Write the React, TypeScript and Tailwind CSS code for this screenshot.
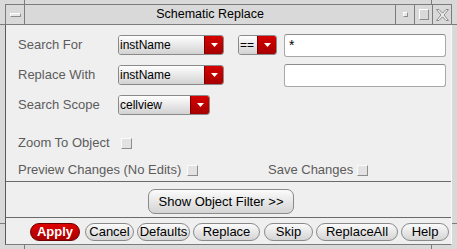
import type { ReactNode } from 'react';

const font = "font-['Liberation_Sans',Arial,sans-serif]";

function Arrow() {
  return (
    <svg width="7" height="4" viewBox="0 0 7 4" aria-hidden>
      <polygon points="0,0 7,0 3.5,4" fill="#ffffff" />
    </svg>
  );
}

function Dropdown({ value, className }: { value: string; className: string }) {
  return (
    <div className={`flex h-[20px] overflow-hidden rounded-[3px] border border-[#8a8a8a] ${className}`}>
      <div className="flex flex-1 items-center bg-linear-to-b from-white to-[#d2d2d2] pl-[1px] text-[12px] text-black">
        {value}
      </div>
      <div className="flex w-[19px] items-center justify-center border-l border-[#7a0000] bg-linear-to-b from-[#d60000] to-[#a60000]">
        <Arrow />
      </div>
    </div>
  );
}

function TextField({ value }: { value?: string }) {
  return (
    <div className="h-[23px] w-[162px] rounded-[3px] border border-[#a8a8a8] border-t-[#8c8c8c] bg-white pl-[4px] text-[14px] leading-[20px] text-black">
      {value}
    </div>
  );
}

function Checkbox() {
  return (
    <div className="h-[11px] w-[11px] border border-[#fbfbfb] border-r-[#8c8c8c] border-b-[#8c8c8c] bg-[#e2e2e2]" />
  );
}

function Row({ label, children }: { label: string; children: ReactNode }) {
  return (
    <div className="flex h-[30px] items-center">
      <div className="w-[100px] text-[13px] text-[#5c5c5c]">{label}</div>
      {children}
    </div>
  );
}

const buttons = [
  { label: 'Apply', cls: 'ml-[24px] w-[50px]', primary: true },
  { label: 'Cancel', cls: 'ml-[5px] w-[49px]' },
  { label: 'Defaults', cls: 'ml-[3px] w-[53px]' },
  { label: 'Replace', cls: 'ml-[3px] w-[67px]' },
  { label: 'Skip', cls: 'ml-[4px] w-[49px]' },
  { label: 'ReplaceAll', cls: 'ml-[3px] w-[82px]' },
  { label: 'Help', cls: 'ml-[3px] w-[48px]' },
];

export default function App() {
  return (
    <div className={`relative h-[249px] w-[457px] overflow-hidden bg-[#d9d9d9] ${font}`}>
      {/* frame corner ticks */}
      <div className="absolute left-[24px] top-0 h-[4px] w-px bg-[#7c7c7c]" />
      <div className="absolute left-[431px] top-0 h-[4px] w-px bg-[#7c7c7c]" />
      <div className="absolute left-0 top-[24px] h-px w-[5px] bg-[#7c7c7c]" />
      <div className="absolute right-0 top-[24px] h-px w-[5px] bg-[#7c7c7c]" />
      <div className="absolute left-0 top-[223px] h-px w-[5px] bg-[#7c7c7c]" />
      <div className="absolute right-0 top-[223px] h-px w-[5px] bg-[#7c7c7c]" />
      <div className="absolute bottom-0 left-[24px] h-[5px] w-px bg-[#7c7c7c]" />
      <div className="absolute bottom-0 left-[431px] h-[5px] w-px bg-[#7c7c7c]" />

      <div className="flex h-full flex-col pl-[5px] pr-[5px] pt-[4px] pb-[4px]">
        {/* title bar */}
        <div className="flex h-[21px] border border-[#7c7c7c] bg-[#d9d9d9]">
          <div className="flex w-[19px] items-center justify-center border-r border-[#7c7c7c]">
            <div className="h-[4px] w-[11px] border border-[#8c8c8c] border-t-white border-l-white bg-[#e8e8e8]" />
          </div>
          <div className="flex flex-1 items-center justify-center text-[12.5px] text-black">
            Schematic Replace
          </div>
          <div className="flex w-[19px] items-center justify-center border-l border-[#7c7c7c]">
            <div className="h-[5px] w-[5px] border border-[#8c8c8c] border-t-white border-l-white bg-[#e8e8e8]" />
          </div>
          <div className="flex w-[18px] items-center justify-center border-l border-[#7c7c7c]">
            <div className="h-[11px] w-[10px] border border-[#8c8c8c] border-t-white border-l-white" />
          </div>
          <div className="flex w-[19px] items-center justify-center border-l border-[#7c7c7c]">
            <svg width="13" height="12" viewBox="0 0 13 12" aria-hidden>
              <path
                d="M0.5 0.5 H3 L6.5 4.2 L10 0.5 H12.5 L8 6 L12.5 11.5 H10 L6.5 7.8 L3 11.5 H0.5 L5 6 Z"
                fill="#efefef"
                stroke="#8c8c8c"
                strokeWidth="1"
              />
            </svg>
          </div>
        </div>

        {/* content */}
        <div className="flex flex-1 flex-col border border-t-0 border-l-[#5a5a5a] border-r-[#fafafa] border-b-[#7c7c7c] bg-[#efefef]">
          <div className="flex flex-col pl-[12px] pt-[5px]">
            <Row label="Search For">
              <Dropdown value="instName" className="w-[106px]" />
              <Dropdown value="==" className="ml-[14px] w-[39px]" />
              <div className="ml-[7px]">
                <TextField value="*" />
              </div>
            </Row>
            <Row label="Replace With">
              <Dropdown value="instName" className="w-[106px]" />
              <div className="ml-[60px]">
                <TextField />
              </div>
            </Row>
            <Row label="Search Scope">
              <Dropdown value="cellview" className="w-[92px]" />
            </Row>
            <div className="mt-[16px] flex h-[14px] items-center text-[13px] text-[#5c5c5c]">
              <span className="w-[103px]">Zoom To Object</span>
              <Checkbox />
            </div>
            <div className="mt-[13px] flex h-[14px] items-center text-[13px] text-[#5c5c5c]">
              <span className="w-[169px]">Preview Changes (No Edits)</span>
              <Checkbox />
              <span className="ml-[70px] w-[89px]">Save Changes</span>
              <Checkbox />
            </div>
          </div>
          <div className="mt-[4px] h-px w-[445px] bg-[#6a6a6a]" />
          <div className="mt-[7px] flex pl-[142px]">
            <div className="flex h-[25px] w-[146px] items-center justify-center rounded-[7px] border border-[#8a8a8a] bg-linear-to-b from-[#fbfbfb] to-[#d4d4d4] text-[13px] text-black">
              Show Object Filter &gt;&gt;
            </div>
          </div>
          <div className="mt-[3px] h-px bg-[#6a6a6a]" />
          <div className="mt-[5px] flex">
            {buttons.map((b) => (
              <div
                key={b.label}
                className={`flex h-[18px] items-center justify-center rounded-full border text-[13px] ${b.cls} ${
                  b.primary
                    ? 'border-[#6a0000] bg-linear-to-b from-[#e00000] to-[#a80000] font-bold text-white'
                    : 'border-[#8a8a8a] bg-linear-to-b from-[#fbfbfb] to-[#d4d4d4] text-black'
                }`}
              >
                {b.label}
              </div>
            ))}
          </div>
        </div>
      </div>
    </div>
  );
}
